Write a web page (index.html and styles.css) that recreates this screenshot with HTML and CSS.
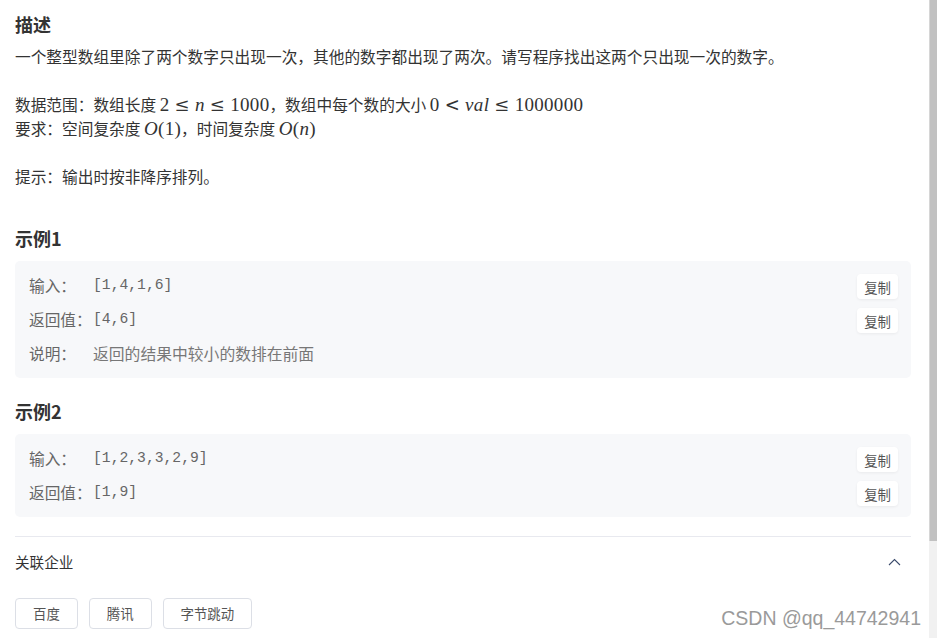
FILE: index.html
```html
<!DOCTYPE html>
<html lang="zh-CN">
<head>
    <meta charset="UTF-8">
    <meta name="viewport" content="width=device-width, initial-scale=1.0">
    <title>题目描述</title>
    <link rel="stylesheet" href="styles.css">
</head>
<body>
    <div class="page">
        <div class="content">
            <h2 class="title">描述</h2>
            <p class="desc">
                一个整型数组里除了两个数字只出现一次，其他的数字都出现了两次。请写程序找出这两个只出现一次的数字。<br>
                <br>
                数据范围：数组长度 <span class="math">2<span class="rel">≤</span><i>n</i><span class="rel">≤</span>1000</span>，数组中每个数的大小 <span class="math">0<span class="rel">&lt;</span><i>val</i><span class="rel">≤</span>1000000</span><br>
                要求：空间复杂度 <span class="math"><i>O</i>(1)</span>，时间复杂度 <span class="math"><i>O</i>(<i>n</i>)</span><br>
                <br>
                提示：输出时按非降序排列。
            </p>

            <h3 class="example-title first">示例1</h3>
            <div class="example">
                <div class="row">
                    <span class="label">输入：</span>
                    <span class="value">[1,4,1,6]</span>
                    <button class="copy">复制</button>
                </div>
                <div class="row">
                    <span class="label">返回值：</span>
                    <span class="value">[4,6]</span>
                    <button class="copy">复制</button>
                </div>
                <div class="row">
                    <span class="label">说明：</span>
                    <span class="value note">返回的结果中较小的数排在前面</span>
                </div>
            </div>

            <h3 class="example-title">示例2</h3>
            <div class="example">
                <div class="row">
                    <span class="label">输入：</span>
                    <span class="value">[1,2,3,3,2,9]</span>
                    <button class="copy">复制</button>
                </div>
                <div class="row">
                    <span class="label">返回值：</span>
                    <span class="value">[1,9]</span>
                    <button class="copy">复制</button>
                </div>
            </div>

            <div class="company">
                <div class="company-head">
                    <span>关联企业</span>
                    <svg class="chevron" width="13" height="8" viewBox="0 0 13 8">
                        <path d="M1 7 L6.5 1.5 L12 7" fill="none" stroke="#3a4a6b" stroke-width="1.1"/>
                    </svg>
                </div>
                <div class="tags">
                    <span class="tag">百度</span>
                    <span class="tag">腾讯</span>
                    <span class="tag">字节跳动</span>
                </div>
            </div>
        </div>
        <div class="scrollbar">
            <div class="thumb"></div>
        </div>
        <div class="watermark">CSDN @qq_44742941</div>
    </div>
</body>
</html>
```

FILE: styles.css
```css
body {
    margin: 0;
    background-color: #fff;
    font-family: "Noto Sans CJK SC", "Liberation Sans", sans-serif;
    color: #333;
}

.page {
    position: relative;
    display: flex;
    height: 100vh;
    overflow: hidden;
}

.content {
    flex: 1;
    padding: 11px 18px 0 15px;
}

.title,
.example-title {
    margin: 0;
    font-size: 18px;
    line-height: 26px;
    font-weight: bold;
    color: #333;
}

.desc {
    margin: 8px 0 0;
    font-size: 15.7px;
    line-height: 24px;
}

.math {
    font-family: "Liberation Serif", "DejaVu Serif", serif;
    font-size: 19px;
    letter-spacing: 0.3px;
    white-space: nowrap;
}

.math i {
    font-style: italic;
}

.math .rel {
    font-family: "DejaVu Serif", serif;
    font-size: 18px;
    margin: 0 0.28em;
}

.example-title {
    margin-top: 20px;
    margin-bottom: 10px;
}

.example-title.first {
    margin-top: 36px;
}

.example {
    background-color: #f7f8fa;
    border-radius: 5px;
    padding: 13px 13px 11px 14px;
    display: flex;
    flex-direction: column;
    gap: 9px;
}

.row {
    display: flex;
    align-items: center;
    height: 25px;
}

.label {
    width: 64px;
    margin-bottom: 3px;
    font-size: 15.7px;
    color: #666;
}

.value {
    flex: 1;
    margin-bottom: 3px;
    font-family: "Liberation Mono", "Noto Sans CJK SC", monospace;
    font-size: 14.7px;
    color: #666;
}

.value.note {
    font-size: 15.8px;
    color: #777;
}

.copy {
    height: 25px;
    padding: 0 7px;
    border: none;
    border-radius: 4px;
    background-color: #fff;
    box-shadow: 0 1px 3px rgba(0, 0, 0, 0.06);
    font-family: "Noto Sans CJK SC", sans-serif;
    font-size: 13.4px;
    color: #555;
    cursor: pointer;
}

.company {
    margin-top: 19px;
    border-top: 1px solid #e8e9ef;
}

.company-head {
    display: flex;
    justify-content: space-between;
    align-items: center;
    padding: 15px 10px 17px 0;
    font-size: 14.6px;
    line-height: 20px;
    color: #333;
}

.tags {
    display: flex;
    gap: 11px;
    margin-top: 9px;
}

.tag {
    height: 29px;
    line-height: 29px;
    padding: 0 17px;
    border: 1px solid #dcdfe6;
    border-radius: 4px;
    font-size: 13.4px;
    color: #555;
}

.scrollbar {
    width: 8px;
    background-color: #f1f1f1;
}

.thumb {
    height: 541px;
    background-color: #c1c1c1;
    border-left: 1px solid #d6d6d6;
}

/* watermark laid over the page */
.watermark {
    position: absolute;
    right: 16px;
    bottom: 9px;
    font-family: "Liberation Sans", Arial, sans-serif;
    font-size: 19.5px;
    line-height: 22px;
    color: #9a9a9a;
    text-shadow: 0 0 1px #fff;
}
```
